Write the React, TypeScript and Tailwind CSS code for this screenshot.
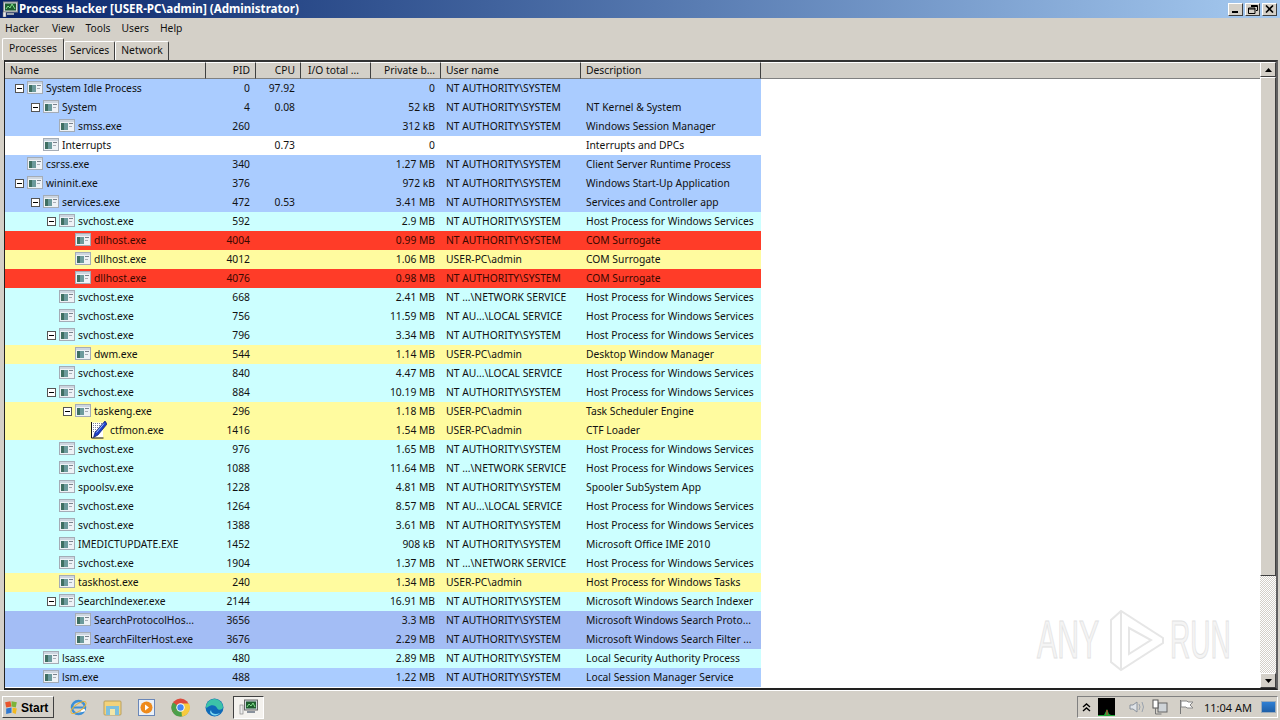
import React from "react";

type Row = { d: number; t?: boolean; n: string; pid: string; cpu?: string; mem: string; u: string; desc: string; c: string; pen?: boolean };
const B = "bg-[#aaccff]", W = "bg-white", C = "bg-[#ccffff]", R = "bg-[#ff3c28] text-[#3a0800]", Y = "bg-[#fffb9f]", D = "bg-[#a3bdf5]";
const SYS = "NT AUTHORITY\\SYSTEM", ADM = "USER-PC\\admin", NET = "NT ...\\NETWORK SERVICE", LOC = "NT AU...\\LOCAL SERVICE", HOST = "Host Process for Windows Services";
const rows: Row[] = [
  { d: 0, t: true, n: "System Idle Process", pid: "0", cpu: "97.92", mem: "0", u: SYS, desc: "", c: B },
  { d: 1, t: true, n: "System", pid: "4", cpu: "0.08", mem: "52 kB", u: SYS, desc: "NT Kernel & System", c: B },
  { d: 2, n: "smss.exe", pid: "260", mem: "312 kB", u: SYS, desc: "Windows Session Manager", c: B },
  { d: 1, n: "Interrupts", pid: "", cpu: "0.73", mem: "0", u: "", desc: "Interrupts and DPCs", c: W },
  { d: 0, n: "csrss.exe", pid: "340", mem: "1.27 MB", u: SYS, desc: "Client Server Runtime Process", c: B },
  { d: 0, t: true, n: "wininit.exe", pid: "376", mem: "972 kB", u: SYS, desc: "Windows Start-Up Application", c: B },
  { d: 1, t: true, n: "services.exe", pid: "472", cpu: "0.53", mem: "3.41 MB", u: SYS, desc: "Services and Controller app", c: B },
  { d: 2, t: true, n: "svchost.exe", pid: "592", mem: "2.9 MB", u: SYS, desc: HOST, c: C },
  { d: 3, n: "dllhost.exe", pid: "4004", mem: "0.99 MB", u: SYS, desc: "COM Surrogate", c: R },
  { d: 3, n: "dllhost.exe", pid: "4012", mem: "1.06 MB", u: ADM, desc: "COM Surrogate", c: Y },
  { d: 3, n: "dllhost.exe", pid: "4076", mem: "0.98 MB", u: SYS, desc: "COM Surrogate", c: R },
  { d: 2, n: "svchost.exe", pid: "668", mem: "2.41 MB", u: NET, desc: HOST, c: C },
  { d: 2, n: "svchost.exe", pid: "756", mem: "11.59 MB", u: LOC, desc: HOST, c: C },
  { d: 2, t: true, n: "svchost.exe", pid: "796", mem: "3.34 MB", u: SYS, desc: HOST, c: C },
  { d: 3, n: "dwm.exe", pid: "544", mem: "1.14 MB", u: ADM, desc: "Desktop Window Manager", c: Y },
  { d: 2, n: "svchost.exe", pid: "840", mem: "4.47 MB", u: LOC, desc: HOST, c: C },
  { d: 2, t: true, n: "svchost.exe", pid: "884", mem: "10.19 MB", u: SYS, desc: HOST, c: C },
  { d: 3, t: true, n: "taskeng.exe", pid: "296", mem: "1.18 MB", u: ADM, desc: "Task Scheduler Engine", c: Y },
  { d: 4, pen: true, n: "ctfmon.exe", pid: "1416", mem: "1.54 MB", u: ADM, desc: "CTF Loader", c: Y },
  { d: 2, n: "svchost.exe", pid: "976", mem: "1.65 MB", u: SYS, desc: HOST, c: C },
  { d: 2, n: "svchost.exe", pid: "1088", mem: "11.64 MB", u: NET, desc: HOST, c: C },
  { d: 2, n: "spoolsv.exe", pid: "1228", mem: "4.81 MB", u: SYS, desc: "Spooler SubSystem App", c: C },
  { d: 2, n: "svchost.exe", pid: "1264", mem: "8.57 MB", u: LOC, desc: HOST, c: C },
  { d: 2, n: "svchost.exe", pid: "1388", mem: "3.61 MB", u: SYS, desc: HOST, c: C },
  { d: 2, n: "IMEDICTUPDATE.EXE", pid: "1452", mem: "908 kB", u: SYS, desc: "Microsoft Office IME 2010", c: C },
  { d: 2, n: "svchost.exe", pid: "1904", mem: "1.37 MB", u: NET, desc: HOST, c: C },
  { d: 2, n: "taskhost.exe", pid: "240", mem: "1.34 MB", u: ADM, desc: "Host Process for Windows Tasks", c: Y },
  { d: 2, t: true, n: "SearchIndexer.exe", pid: "2144", mem: "16.91 MB", u: SYS, desc: "Microsoft Windows Search Indexer", c: C },
  { d: 3, n: "SearchProtocolHos...", pid: "3656", mem: "3.3 MB", u: SYS, desc: "Microsoft Windows Search Proto...", c: D },
  { d: 3, n: "SearchFilterHost.exe", pid: "3676", mem: "2.29 MB", u: SYS, desc: "Microsoft Windows Search Filter ...", c: D },
  { d: 1, n: "lsass.exe", pid: "480", mem: "2.89 MB", u: SYS, desc: "Local Security Authority Process", c: C },
  { d: 1, n: "lsm.exe", pid: "488", mem: "1.22 MB", u: SYS, desc: "Local Session Manager Service", c: B },
];

const ProcIcon = () => (
  <svg width="16" height="16" viewBox="0 0 16 16" className="shrink-0 -translate-y-px">
    <rect x="0.5" y="1.5" width="15" height="12" fill="#eef2f6" stroke="#a4acb6" />
    <rect x="1" y="2" width="14" height="2" fill="#cdd6e0" />
    <rect x="2" y="5" width="7" height="7" fill="#6c9a9c" />
    <rect x="2" y="5" width="3" height="7" fill="#3f6f62" />
    <rect x="10" y="5" width="4" height="1" fill="#7a828c" />
    <rect x="10" y="8" width="3" height="1" fill="#a8aeb6" />
  </svg>
);
const PenIcon = () => (
  <svg width="16" height="18" viewBox="0 0 16 18" className="shrink-0 -translate-y-px">
    <path d="M1 1.5h11v15H1" fill="#fff" />
    <path d="M0.5 1v16h12" fill="none" stroke="#111" />
    <path d="M2 2.5h9M2 4.5h8M2 6.5h6M2 8.5h4M2 10.5h3" stroke="#7d8296" strokeDasharray="1 1" />
    <path d="M14 0 L16 3 L7 14 L2.5 16.5 L4 11.5 Z" fill="#1c3fc8" stroke="#0a1a66" strokeWidth="0.7" />
    <path d="M13 2.5 L5.5 11.5" stroke="#9fc0ff" />
  </svg>
);
const Toggle = () => (
  <span className="w-[9px] h-[9px] border border-[#555] bg-white flex items-center justify-center shrink-0">
    <span className="w-[5px] h-px bg-black" />
  </span>
);

const cols = [
  { l: "Name", w: "w-[201px]", a: "text-left pl-[5px]" },
  { l: "PID", w: "w-[50px]", a: "text-right pr-[5px]" },
  { l: "CPU", w: "w-[45px]", a: "text-right pr-[5px]" },
  { l: "I/O total ...", w: "w-[70px]", a: "text-left pl-[7px]" },
  { l: "Private b...", w: "w-[70px]", a: "text-right pr-[5px]" },
  { l: "User name", w: "w-[140px]", a: "text-left pl-[5px]" },
  { l: "Description", w: "w-[180px]", a: "text-left pl-[5px]" },
];

const WinBtn = ({ children }: { children: React.ReactNode }) => (
  <span className="w-[15px] h-[13px] bg-[#d4d0c8] border-t border-l border-white border-r border-b border-r-[#404040] border-b-[#404040] flex items-center justify-center">
    {children}
  </span>
);

const ScrollBtn = ({ up }: { up?: boolean }) => (
  <span className="w-[16px] h-[15px] bg-[#d4d0c8] border-t border-l border-white border-r border-b border-r-[#404040] border-b-[#404040] flex items-center justify-center shrink-0">
    <svg width="7" height="4" viewBox="0 0 7 4">
      <path d={up ? "M3.5 0 L7 4 L0 4 Z" : "M0 0 L7 0 L3.5 4 Z"} fill="#000" />
    </svg>
  </span>
);

const Tab = ({ label, active }: { label: string; active?: boolean }) => (
  <div className={active
    ? "h-[22px] w-[62px] pb-[3px] bg-[#d4d0c8] border-t border-l border-white border-r border-r-[#404040] rounded-t-[2px] flex items-center justify-center"
    : "h-[19px] mt-[3px] pb-[2px] bg-[#d4d0c8] border-t border-l border-white border-r border-r-[#404040] rounded-t-[2px] flex items-center justify-center px-[5px]"}>
    {label}
  </div>
);

export default function App() {
  return (
    <div className="w-[1280px] h-[720px] overflow-hidden flex flex-col bg-[#d4d0c8] text-[10.3px] leading-none text-[#111] font-['Noto_Sans',sans-serif]">
      {/* title */}
      <div className="h-[18px] shrink-0 bg-gradient-to-r from-[#0a246a] to-[#a6caf0] flex items-center pl-[2px] pr-[3px]">
        <svg width="17" height="16" viewBox="0 0 17 16" className="shrink-0">
          <rect x="1.5" y="1" width="14" height="10" fill="#cfd6dc" stroke="#888" />
          <rect x="3" y="2.5" width="11" height="7" fill="#1d5c2e" />
          <path d="M4 8l2-3 2 2 2-4 3 5" stroke="#7fe08a" fill="none" />
          <rect x="5" y="12" width="7" height="2" fill="#9aa3ae" />
          <rect x="1" y="11" width="3" height="5" fill="#e8e8e8" stroke="#777" strokeWidth="0.5" />
        </svg>
        <span className="text-white font-bold text-[11.6px]">Process Hacker [USER-PC\admin] (Administrator)</span>
        <span className="ml-auto flex gap-[2px]">
          <WinBtn><span className="w-[6px] h-[2px] bg-black mt-[6px] -ml-[2px]" /></WinBtn>
          <WinBtn>
            <svg width="10" height="9" viewBox="0 0 10 9"><path d="M3 0.5h6.5v5H8M0.5 3h6.5v5.5H0.5z M3 1.5h6.5M0.5 4h6.5" stroke="#000" fill="none" /></svg>
          </WinBtn>
          <WinBtn>
            <svg width="9" height="8" viewBox="0 0 9 8"><path d="M1 0.5l7 7M8 0.5l-7 7" stroke="#000" strokeWidth="1.6" /></svg>
          </WinBtn>
        </span>
      </div>
      {/* menu */}
      <div className="h-[20px] shrink-0 flex items-center gap-[11px] pl-[5px] bg-[#d4d0c8]">
        {["Hacker", "View", "Tools", "Users", "Help"].map((m) => <span key={m} className="first:mr-[2px]">{m}</span>)}
      </div>
      {/* tabs */}
      <div className="h-[22px] shrink-0 flex items-start pl-[2px] relative z-10">
        <Tab label="Processes" active />
        <Tab label="Services" />
        <Tab label="Network" />
      </div>
      {/* list */}
      <div className="h-[630px] shrink-0 ml-[4px] mr-[2px] flex border border-t-2 border-r-2 border-b-2 border-[#222] border-r-[#606060] border-t-[#333] bg-white">
        <div className="flex-1 min-w-0 flex flex-col overflow-hidden">
          <div className="h-[17px] shrink-0 flex bg-[#d4d0c8]">
            {cols.map((c) => (
              <div key={c.l} className={`${c.w} ${c.a} shrink-0 h-full flex items-center border-r border-r-[#404040] border-b border-b-[#808080] border-t border-t-white`}>
                <span className="w-full whitespace-nowrap">{c.l}</span>
              </div>
            ))}
            <div className="flex-1 border-b border-b-[#808080] border-t border-t-white" />
          </div>
          {rows.map((r, i) => (
            <div key={i} className={`h-[19px] shrink-0 w-[756px] flex items-center ${r.c}`}>
              <div className="w-[201px] shrink-0 flex items-center whitespace-nowrap">
                <span className="shrink-0 flex justify-end pr-[3px]" style={{ width: 22 + r.d * 16 }}>
                  {r.t ? <Toggle /> : null}
                </span>
                {r.pen ? <PenIcon /> : <ProcIcon />}
                <span className="ml-[3px]">{r.n}</span>
              </div>
              <div className="w-[50px] shrink-0 text-right pr-[6px]">{r.pid}</div>
              <div className="w-[45px] shrink-0 text-right pr-[6px]">{r.cpu}</div>
              <div className="w-[70px] shrink-0" />
              <div className="w-[70px] shrink-0 text-right pr-[6px]">{r.mem}</div>
              <div className="w-[140px] shrink-0 pl-[5px] whitespace-nowrap">{r.u}</div>
              <div className="w-[180px] shrink-0 pl-[5px] whitespace-nowrap">{r.desc}</div>
            </div>
          ))}
        </div>
        <div className="w-[16px] shrink-0 flex flex-col bg-[repeating-conic-gradient(#d4d0c8_0_25%,#ffffff_0_50%)] bg-[length:2px_2px]">
          <ScrollBtn up />
          <div className="h-[499px] shrink-0 bg-[#d4d0c8] border-t border-l border-white border-r border-b border-r-[#404040] border-b-[#404040]" />
          <div className="flex-1" />
          <ScrollBtn />
        </div>
      </div>
      {/* watermark */}
      <div className="absolute left-[1037px] top-[606px] w-[200px] h-[70px] pointer-events-none font-['Liberation_Sans',sans-serif] text-[54px] text-[#f4f4f4] [-webkit-text-stroke:1px_#e2e2e2]">
        <span className="absolute left-0 top-[6px] origin-left scale-x-[0.56]">ANY</span>
        <svg width="60" height="66" viewBox="0 0 60 66" className="absolute left-[70px] top-[2px]">
          <path d="M4 12 L14 3 L56 30 L56 35 L14 62 L4 54 Z" fill="none" stroke="#e6e6e6" strokeWidth="2" />
          <path d="M14 3 V62 M22 20 L44 32 L22 46 Z" fill="none" stroke="#e6e6e6" strokeWidth="2" />
        </svg>
        <span className="absolute left-[133px] top-[6px] origin-left scale-x-[0.52]">RUN</span>
      </div>
      {/* taskbar */}
      <div className="flex-1 flex items-center border-t border-t-white bg-[#d4d0c8] pl-[2px] pr-[2px] pt-[3px]">
        <div className="h-[22px] w-[52px] bg-[#d4d0c8] border-t border-l border-white border-r border-b border-r-[#404040] border-b-[#404040] flex items-center font-bold text-black text-[12px] gap-px font-['Liberation_Sans',sans-serif]">
          <svg width="17" height="17" viewBox="0 0 16 16" className="shrink-0">
            <path d="M2 3l5-1 1 5-5 1z" fill="#e8552d" /><path d="M8 2l5 1-1 5-4-1z" fill="#7db43a" /><path d="M3 9l5-1 0 5-5 1z" fill="#2f78d0" /><path d="M9 8l4 1-1 5-3-1z" fill="#f2b81f" />
          </svg>
          <span className="pt-px">Start</span>
        </div>
        <div className="ml-[15px] flex items-center gap-[15px]">
          <svg width="19" height="19" viewBox="0 0 19 19"><circle cx="9.5" cy="9.5" r="6.5" fill="none" stroke="#3b8fd8" strokeWidth="2.5" /><path d="M4 9.5h11" stroke="#3b8fd8" strokeWidth="2" /><path d="M12 13l4-1" stroke="#fff" strokeWidth="2.5" /><ellipse cx="9.5" cy="9.5" rx="9" ry="3.5" transform="rotate(-35 9.5 9.5)" fill="none" stroke="#e5b43a" /></svg>
          <svg width="19" height="19" viewBox="0 0 19 19"><rect x="1" y="3" width="17" height="14" rx="1" fill="#f3d27a" stroke="#b8a060" /><rect x="3" y="8" width="13" height="9" fill="#7ec0dd" /><rect x="7" y="11" width="5" height="6" fill="#f3e6a8" /></svg>
          <svg width="19" height="19" viewBox="0 0 19 19"><rect x="1.5" y="1.5" width="16" height="16" fill="#eaf0f8" stroke="#6a87b8" /><circle cx="9.5" cy="9.5" r="6" fill="#ee8a1c" /><path d="M8 6.5l4 3-4 3z" fill="#fff" /></svg>
          <svg width="19" height="19" viewBox="0 0 19 19"><circle cx="9.5" cy="9.5" r="9" fill="#dd4b3c" /><path d="M9.5 9.5 L1.6 14 A9 9 0 0 1 2 4.5 Z" fill="#4aa04a" /><path d="M9.5 9.5 L1.6 14 A9 9 0 0 0 17.5 13.5 Z" fill="#4aa04a" /><path d="M9.5 5.5 H18 A9 9 0 0 1 11 18.4 Z" fill="#f7ca3e" /><circle cx="9.5" cy="9.5" r="4.2" fill="#fff" /><circle cx="9.5" cy="9.5" r="3.2" fill="#4587f3" /></svg>
          <svg width="19" height="19" viewBox="0 0 19 19"><circle cx="9.5" cy="9.5" r="9" fill="#0f6ab8" /><path d="M1 10 A8.5 8.5 0 0 1 18 9 C18 12 13 13 12 10 C11 7 6 6 3 9 Z" fill="#3cc2a8" /><path d="M6 12 C6 16 11 17 15 15 C11 19 6 18 5 14 Z" fill="#7fd8f0" /></svg>
        </div>
        <div className="ml-[9px] w-[31px] h-[23px] bg-[#f4f2ee] border-t border-l border-[#404040] border-r border-b border-r-white border-b-white flex items-center justify-center">
          <svg width="20" height="17" viewBox="0 0 20 17"><rect x="5.5" y="1" width="13" height="10" fill="#cfd6dc" stroke="#666" /><rect x="7" y="2.5" width="10" height="7" fill="#1d5c2e" /><path d="M8 8l2-3 2 2 2-3 2 4" stroke="#7fe08a" fill="none" /><rect x="8" y="12" width="8" height="2" fill="#8a929c" /><rect x="1" y="6" width="3" height="9" fill="#eee" stroke="#777" strokeWidth="0.6" /></svg>
        </div>
        <div className="ml-auto h-[22px] w-[201px] border-t border-l border-[#808080] border-r border-b border-r-white border-b-white flex items-center text-black">
          <svg width="9" height="9" viewBox="0 0 9 9" className="ml-[4px] shrink-0"><path d="M1 4l3.5-3L8 4M1 8l3.5-3L8 8" stroke="#000" strokeWidth="1.4" fill="none" /></svg>
          <svg width="17" height="18" viewBox="0 0 17 18" className="ml-[7px] shrink-0"><rect width="17" height="18" fill="#000" /><path d="M0 17h6l3-6 2 5 2 1h4v1H0z" fill="#22a83a" /><path d="M9 12v5" stroke="#e03030" /></svg>
          <svg width="16" height="16" viewBox="0 0 16 16" className="ml-[14px] shrink-0"><path d="M1 6h3l4-3v10l-4-3H1z" fill="#dfe3e8" stroke="#8a929c" /><path d="M10 5q2 3 0 6M13 3q3 5 0 10" stroke="#9aa3ae" fill="none" /></svg>
          <svg width="16" height="16" viewBox="0 0 16 16" className="ml-[7px] shrink-0"><rect x="6" y="4" width="9" height="9" fill="#cfd4d8" stroke="#666" /><rect x="1" y="1" width="5" height="8" fill="#fff" stroke="#555" /><path d="M3.5 9v6h6" stroke="#777" fill="none" /></svg>
          <svg width="16" height="16" viewBox="0 0 16 16" className="ml-[10px] shrink-0"><path d="M2.5 1v14" stroke="#777" /><path d="M3 2h6l1 1h5l-3 3 3 3H9L8 8H3z" fill="#fff" stroke="#888" /></svg>
          <span className="ml-auto mr-[9px] text-[11px] text-[#111]">11:04 AM</span>
          <span className="w-[15px] h-[12px] mr-px shrink-0 bg-gradient-to-b from-[#2f7fd4] to-[#1e5fa8] border border-[#9ab] block" />
        </div>
      </div>
    </div>
  );
}
